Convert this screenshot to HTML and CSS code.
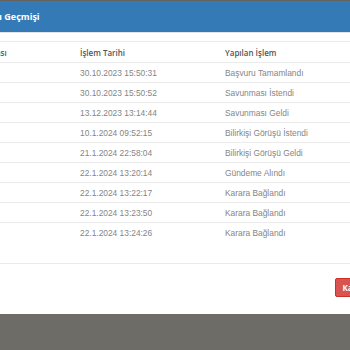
FILE: index.html
```html
<!DOCTYPE html>
<html lang="tr">
<head>
    <meta charset="UTF-8">
    <meta name="viewport" content="width=device-width, initial-scale=1.0">
    <title>Başvuru Geçmişi</title>
    <link rel="stylesheet" href="styles.css">
</head>
<body>
    <div class="modal">
        <div class="modal-header">
            <h4 class="modal-title">Başvuru Geçmişi</h4>
        </div>
        <div class="modal-body">
            <table class="history">
                <colgroup>
                    <col class="col-no">
                    <col class="col-date">
                    <col class="col-action">
                </colgroup>
                <thead>
                    <tr>
                        <th>İşlem Sırası</th>
                        <th>İşlem Tarihi</th>
                        <th>Yapılan İşlem</th>
                    </tr>
                </thead>
                <tbody>
                    <tr><td>1</td><td>30.10.2023 15:50:31</td><td>Başvuru Tamamlandı</td></tr>
                    <tr><td>2</td><td>30.10.2023 15:50:52</td><td>Savunması İstendi</td></tr>
                    <tr><td>3</td><td>13.12.2023 13:14:44</td><td>Savunması Geldi</td></tr>
                    <tr><td>4</td><td>10.1.2024 09:52:15</td><td>Bilirkişi Görüşü İstendi</td></tr>
                    <tr><td>5</td><td>21.1.2024 22:58:04</td><td>Bilirkişi Görüşü Geldi</td></tr>
                    <tr><td>6</td><td>22.1.2024 13:20:14</td><td>Gündeme Alındı</td></tr>
                    <tr><td>7</td><td>22.1.2024 13:22:17</td><td>Karara Bağlandı</td></tr>
                    <tr><td>8</td><td>22.1.2024 13:23:50</td><td>Karara Bağlandı</td></tr>
                    <tr><td>9</td><td>22.1.2024 13:24:26</td><td>Karara Bağlandı</td></tr>
                </tbody>
            </table>
        </div>
        <div class="modal-footer">
            <button type="button" class="btn-close">Kapat</button>
        </div>
    </div>
</body>
</html>
```

FILE: styles.css
```css
html, body {
    overflow: hidden;
}
body {
    margin: 0;
    background-color: #6d6c67;
    font-family: "Liberation Sans", Arial, sans-serif;
}
.modal {
    width: 450px;
    margin: 1px 0 0 -60px;
    background-color: #fff;
    box-shadow: 0 3px 8px rgba(0, 0, 0, 0.45);
}
.modal-header {
    height: 31px;
    display: flex;
    align-items: center;
    padding-left: 25px;
    background-color: #337ab7;
    border-bottom: 1px solid #e5e5e5;
}
.modal-title {
    margin: 0;
    color: #fff;
    font-family: "Open Sans", sans-serif;
    font-size: 9px;
    font-weight: 700;
}
.modal-body {
    padding: 8px 10px 21px 17px;
}
.history {
    width: 100%;
    border-collapse: separate;
    border-spacing: 0;
    table-layout: fixed;
}
.col-no {
    width: 117px;
}
.col-date {
    width: 145px;
}
.history th,
.history td {
    padding: 0 6px;
    text-align: left;
    white-space: nowrap;
    border-top: 1px solid #ececec;
}
.history th {
    height: 20px;
    color: #555;
    font-family: "Open Sans", sans-serif;
    font-size: 8px;
    font-weight: 600;
}
.history td {
    height: 19px;
    color: #858585;
    font-size: 8.4px;
}
.modal-footer {
    display: flex;
    justify-content: flex-end;
    padding: 14px 17px 17px;
    border-top: 1px solid #eaeaea;
}
.btn-close {
    height: 19px;
    padding: 0 6px;
    color: #fff;
    background-color: #d9534f;
    border: 1px solid #c9302c;
    border-radius: 2px;
    font-family: "Open Sans", sans-serif;
    font-size: 8px;
    font-weight: 700;
}
```
